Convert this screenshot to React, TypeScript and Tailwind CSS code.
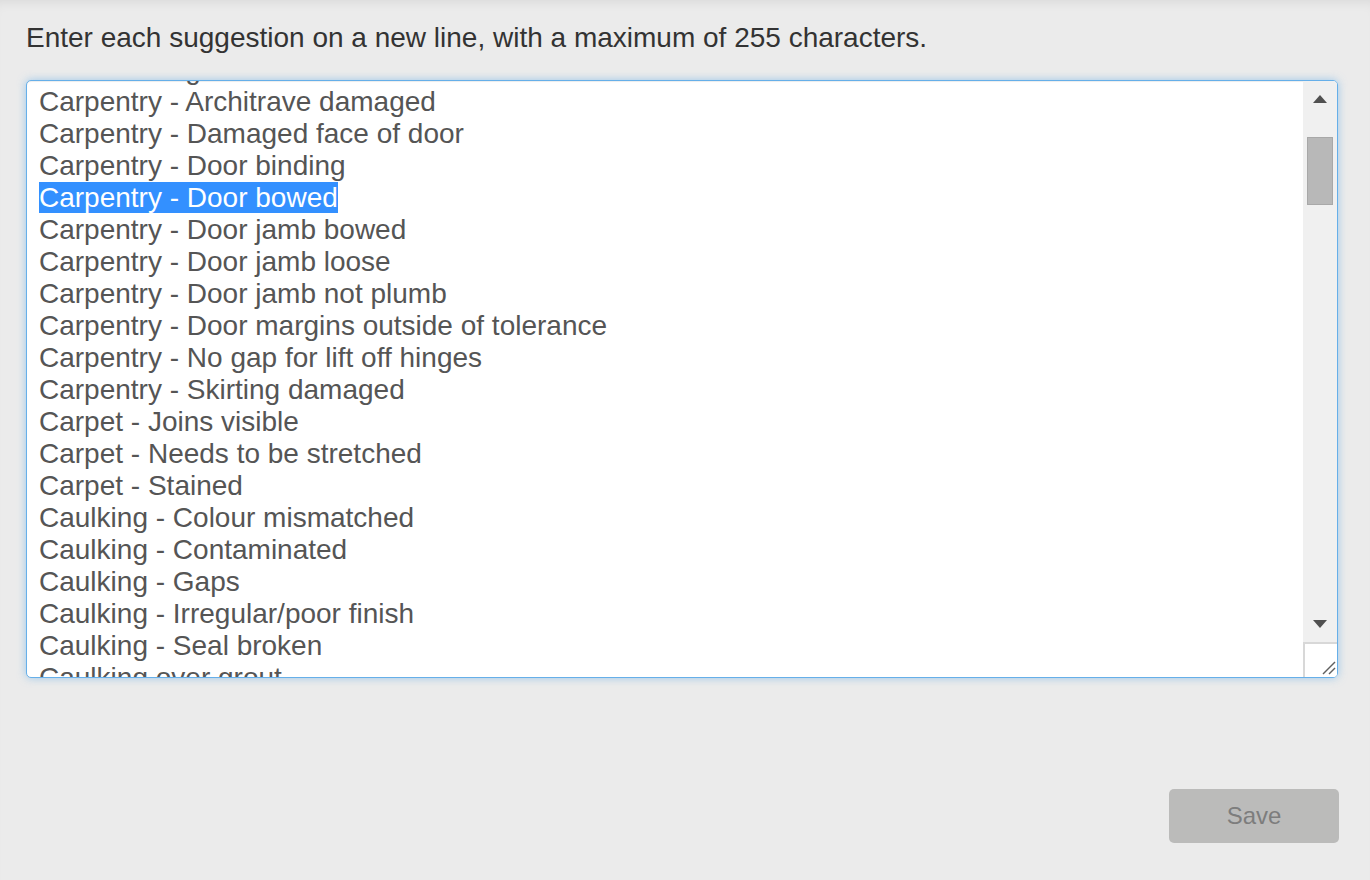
const suggestions = [
  "Brickwork - grout loose",
  "Carpentry - Architrave damaged",
  "Carpentry - Damaged face of door",
  "Carpentry - Door binding",
  "Carpentry - Door bowed",
  "Carpentry - Door jamb bowed",
  "Carpentry - Door jamb loose",
  "Carpentry - Door jamb not plumb",
  "Carpentry - Door margins outside of tolerance",
  "Carpentry - No gap for lift off hinges",
  "Carpentry - Skirting damaged",
  "Carpet - Joins visible",
  "Carpet - Needs to be stretched",
  "Carpet - Stained",
  "Caulking - Colour mismatched",
  "Caulking - Contaminated",
  "Caulking - Gaps",
  "Caulking - Irregular/poor finish",
  "Caulking - Seal broken",
  "Caulking over grout",
  "Ceiling - Cracked",
];

const selected = "Carpentry - Door bowed";

export default function App() {
  return (
    <div className="min-h-[880px] bg-[#ebebeb] pl-[26px] pr-[32px] pt-[22px] font-['Liberation_Sans',Arial,sans-serif] shadow-[inset_0_10px_12px_-8px_rgba(0,0,0,0.08)]">
      {/* Help text */}
      <p className="text-[28px] leading-[32px] text-[#333333]">
        Enter each suggestion on a new line, with a maximum of 255 characters.
      </p>

      {/* Textarea */}
      <div className="mt-[26px] flex h-[598px] overflow-hidden rounded-[5px] border border-[#66afe9] bg-white shadow-[inset_0_1px_1px_rgba(0,0,0,0.075),0_0_8px_rgba(102,175,233,0.6)]">
        <div className="flex-1 overflow-hidden pl-[12px]">
          <div className="-mt-[27px]">
            {suggestions.map((s) => (
              <div
                key={s}
                className="whitespace-nowrap text-[28px] leading-[32px] text-[#555555]"
              >
                {s === selected ? (
                  <span className="bg-[#3390ff] text-white">{s}</span>
                ) : (
                  s
                )}
              </div>
            ))}
          </div>
        </div>

        {/* Scrollbar */}
        <div className="flex w-[34px] flex-col bg-[#f0f0f0]">
          <div className="flex h-[36px] items-center justify-center">
            <svg width="14" height="8" viewBox="0 0 14 8">
              <polygon points="7,0 14,8 0,8" fill="#505050" />
            </svg>
          </div>
          <div className="flex-1 pt-[20px]">
            <div className="ml-[4px] h-[68px] w-[26px] border border-[#a8a8a8] bg-[#b8b8b8]" />
          </div>
          <div className="flex h-[36px] items-center justify-center">
            <svg width="14" height="8" viewBox="0 0 14 8">
              <polygon points="0,0 14,0 7,8" fill="#505050" />
            </svg>
          </div>
          <div className="relative h-[35px] border-t-2 border-l-2 border-[#d8d8d8] bg-white">
            <svg
              className="absolute right-[1px] bottom-[2px]"
              width="14"
              height="14"
              viewBox="0 0 14 14"
            >
              <line x1="1" y1="13" x2="13" y2="1" stroke="#606060" strokeWidth="1.5" />
              <line x1="7" y1="13" x2="13" y2="7" stroke="#606060" strokeWidth="1.5" />
            </svg>
          </div>
        </div>
      </div>

      {/* Actions */}
      <div className="-mr-px mt-[111px] flex justify-end">
        <button
          type="button"
          disabled
          className="h-[54px] w-[170px] rounded-[5px] bg-[#bbbbba] text-[24px] text-[#7d7d7d]"
        >
          Save
        </button>
      </div>
    </div>
  );
}
